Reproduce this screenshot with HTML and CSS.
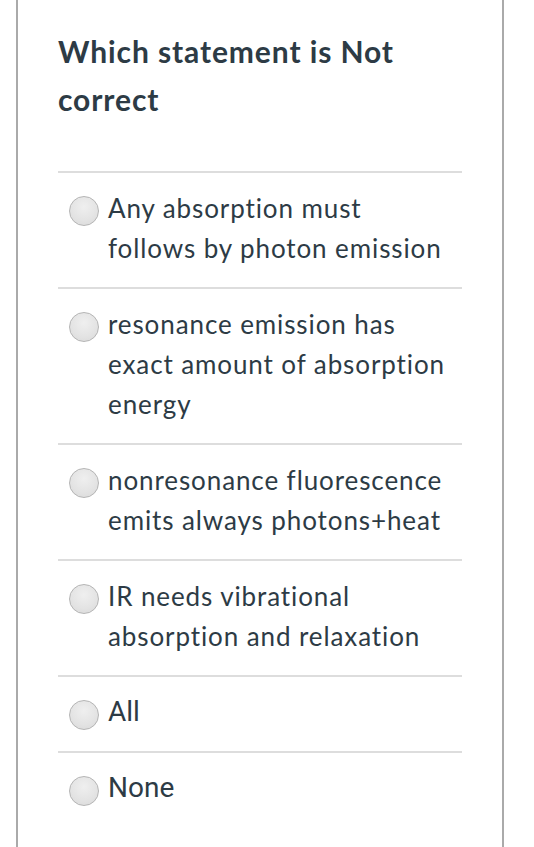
FILE: index.html
```html
<!DOCTYPE html>
<html lang="en">
<head>
<meta charset="utf-8">
<title>Quiz question</title>
<link rel="stylesheet" href="styles.css">
</head>
<body>
<div class="panel">
  <h1 class="question">Which statement is Not correct</h1>
  <ul class="answers">
    <li class="answer"><span class="radio"></span><span class="label">Any absorption must follows by photon emission</span></li>
    <li class="answer"><span class="radio"></span><span class="label">resonance emission has exact amount of absorption energy</span></li>
    <li class="answer"><span class="radio"></span><span class="label">nonresonance fluorescence emits always photons+heat</span></li>
    <li class="answer"><span class="radio"></span><span class="label">IR needs vibrational absorption and relaxation</span></li>
    <li class="answer"><span class="radio"></span><span class="label alt">All</span></li>
    <li class="answer"><span class="radio"></span><span class="label alt">None</span></li>
  </ul>
</div>
</body>
</html>
```

FILE: styles.css
```css
html, body {
  margin: 0;
  padding: 0;
  background: #ffffff;
  height: 100%;
}
body {
  font-family: Lato, "Liberation Sans", sans-serif;
  font-variant-ligatures: none;
  color: #2d3b45;
}
.panel {
  box-sizing: border-box;
  margin-left: 16px;
  width: 488px;
  min-height: 100%;
  border-left: 2px solid #aaaaaa;
  border-right: 2px solid #aaaaaa;
  padding: 27px 40px 0 40px;
}
.question {
  margin: 0 0 48px 0;
  font-size: 30px;
  font-weight: 700;
  letter-spacing: 0.9px;
  line-height: 48px;
  width: 360px;
  color: #2d3b45;
}
.answers {
  list-style: none;
  margin: 0;
  padding: 0;
}
.answer {
  display: flex;
  align-items: flex-start;
  border-top: 2px solid #dddddd;
  padding: 15px 0 19px 0;
}
.radio {
  flex: none;
  box-sizing: border-box;
  width: 30px;
  height: 30px;
  margin: 8px 9px 0 11px;
  border-radius: 50%;
  border: 1px solid #b5b5b5;
  background: radial-gradient(circle at 50% 35%, #efefef 0%, #e3e3e3 60%, #d8d8d8 100%);
}
.label {
  max-width: 342px;
  font-size: 26px;
  letter-spacing: 0.9px;
  line-height: 40px;
  color: #2d3b45;
}
.label.alt {
  font-family: Roboto, "Liberation Sans", sans-serif;
  font-size: 28px;
  letter-spacing: 0;
}
```
